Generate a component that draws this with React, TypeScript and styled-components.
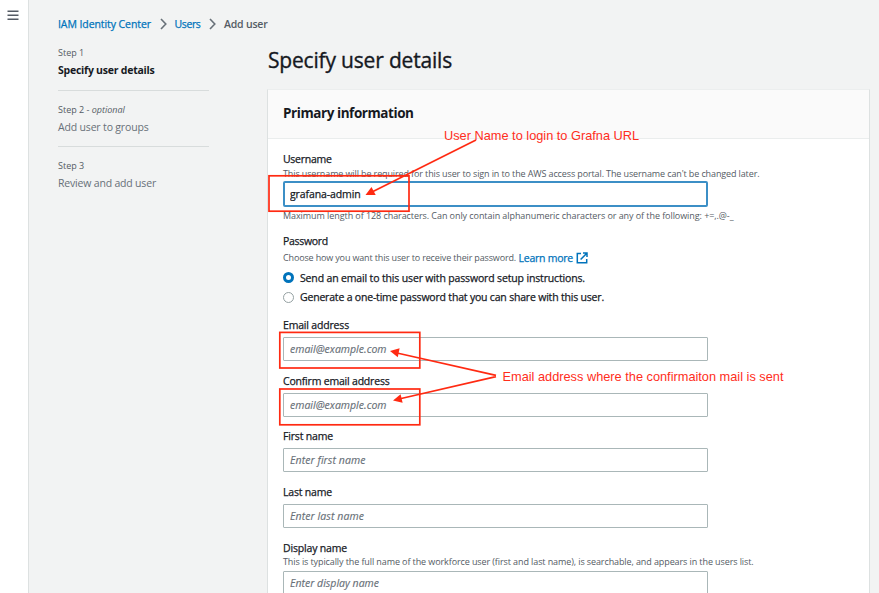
import React from "react";
import styled, { createGlobalStyle, css } from "styled-components";

const GlobalStyle = createGlobalStyle`
  * { box-sizing: border-box; }
  html, body { margin: 0; padding: 0; overflow: hidden; }
  body {
    background: #f2f3f3;
    color: #16191f;
    font-family: "Open Sans", "Noto Sans", sans-serif;
    font-size: 10.5px;
    line-height: 14px;
  }
`;

const medium = css`
  font-weight: 500;
  -webkit-text-stroke: 0.25px currentColor;
`;

const Page = styled.div`
  position: relative;
  display: flex;
  width: 879px;
  height: 593px;
  overflow: hidden;
`;

const Rail = styled.aside`
  flex: 0 0 29px;
  background: #fff;
  border-right: 1px solid #dde1e1;
  padding: 10px 0 0 7px;
`;

const MenuButton = styled.button`
  display: block;
  border: 0;
  padding: 0;
  background: none;
  width: 12px;
  height: 11px;
  svg { display: block; }
`;

const Content = styled.main`
  flex: 1;
  min-width: 0;
  padding: 16px 0 0 29px;
`;

const Text = styled.span<{ $ls?: number }>`
  white-space: nowrap;
  letter-spacing: ${(p) => p.$ls ?? 0}px;
`;

const Breadcrumbs = styled.nav`
  display: flex;
  align-items: center;
  height: 15px;
  svg { flex: none; margin: 0 8px 0 8.5px; }
`;

const Crumb = styled(Text)`
  color: #0073bb;
  ${medium}
`;

const CurrentCrumb = styled(Text)`
  color: #545b64;
  font-weight: 600;
`;

const Columns = styled.div`
  display: flex;
  align-items: flex-start;
`;

const Steps = styled.ol`
  list-style: none;
  margin: 0;
  padding: 15px 0 0;
  width: 151px;
  flex: none;
`;

const Step = styled.li`
  height: 56px;
  & + & { border-top: 1px solid #d8dcdc; padding-top: 12px; }
  &:first-child { height: 44px; }
`;

const StepNumber = styled.div`
  color: #545b64;
  font-size: 9px;
  line-height: 14px;
  white-space: nowrap;
`;

const StepTitle = styled.div<{ $active?: boolean; $ls: number }>`
  margin-top: 3px;
  white-space: nowrap;
  letter-spacing: ${(p) => p.$ls}px;
  ${(p) => (p.$active ? css`font-weight: 700; color: #16191f;` : css`color: #687078;`)}
`;

const FormColumn = styled.section`
  width: 603px;
  margin-left: 58px;
  flex: none;
`;

const PageTitle = styled.h1`
  margin: 0 0 0 1px;
  height: 58px;
  padding-top: 14px;
  font-size: 21px;
  line-height: 30px;
  font-weight: 400;
  letter-spacing: -0.184px;
  -webkit-text-stroke: 0.35px #16191f;
`;

const Card = styled.div`
  height: 540px;
  background: #fff;
  border: 1px solid #dde1e1;
  border-top-color: #eceeee;
`;

const CardHeader = styled.header`
  height: 49px;
  padding: 13px 15px 0;
  background: #fafafa;
  border-bottom: 1px solid #eaeded;
`;

const CardTitle = styled.h2`
  margin: 0;
  font-size: 13.5px;
  line-height: 20px;
  font-weight: 700;
  letter-spacing: -0.436px;
`;

const Form = styled.form`
  padding: 13px 0 0 15px;
  width: 440px;
`;

const Label = styled(Text)`
  display: block;
  ${medium}
`;

const Hint = styled(Text)`
  display: block;
  font-size: 9px;
  color: #545b64;
`;

const Input = styled.input<{ $ls: number; $focused?: boolean }>`
  display: block;
  width: 425px;
  height: 24px;
  padding: 0 6px;
  font: 500 10.5px/20px "Open Sans", "Noto Sans", sans-serif;
  letter-spacing: ${(p) => p.$ls}px;
  color: #16191f;
  background: #fff;
  outline: none;
  border-radius: 1px;
  border: 1px solid #aab7b8;
  ${(p) =>
    p.$focused &&
    css`
      height: 26px;
      border: 2px solid #3c8fc6;
      border-radius: 2px;
      padding: 0 5px;
      -webkit-text-stroke: 0.25px currentColor;
    `}
  &::placeholder { color: #687078; font-style: italic; font-weight: 400; opacity: 1; -webkit-text-stroke: 0.15px currentColor; }
`;

const UsernameGroup = styled.div`
  height: 82px;
  ${Label} + ${Hint} { margin-top: 1px; }
  ${Input} { margin: 0 0 2px; }
`;

const PasswordGroup = styled.fieldset`
  border: 0;
  margin: 0;
  padding: 0;
  height: 84.2px;
`;

const PasswordHint = styled.div`
  display: flex;
  align-items: center;
  margin-top: 3px;
  height: 14px;
  svg { margin-left: 3px; flex: none; }
`;

const LearnMore = styled(Text)`
  margin-left: 2.5px;
  color: #0073bb;
  ${medium}
`;

const RadioRow = styled.label`
  display: flex;
  align-items: center;
  height: 14px;
  margin-top: 5.5px;
  ${medium}
`;

const Radio = styled.span<{ $checked?: boolean }>`
  flex: none;
  width: 11px;
  height: 11px;
  margin-right: 6px;
  border-radius: 50%;
  background: #fff;
  border: ${(p) => (p.$checked ? "3.5px solid #0073bb" : "1px solid #95a1a2")};
`;

const Field = styled.div<{ $hint?: boolean }>`
  height: 55.6px;
  ${Label} { margin-bottom: ${(p) => (p.$hint ? 0.5 : 4.8)}px; }
  ${Hint} { margin-bottom: 1.5px; }
`;

const Annotations = styled.div`
  position: absolute;
  inset: 0;
  pointer-events: none;
  svg { display: block; }
`;

const Note = styled.span<{ $x: number; $y: number }>`
  position: absolute;
  left: ${(p) => p.$x}px;
  top: ${(p) => p.$y}px;
  font: 12.78px/16px "Liberation Sans", Arial, sans-serif;
  color: #ff2d1c;
  white-space: nowrap;
`;

const Chevron = () => (
  <svg width="7" height="12" viewBox="0 0 7 12" fill="none" stroke="#687078" strokeWidth="1.6">
    <path d="M1 1l4.8 5L1 11" />
  </svg>
);

const fields = [
  { label: "Email address", ls: -0.177, placeholder: "email@example.com", pls: 0.014 },
  { label: "Confirm email address", ls: -0.198, placeholder: "email@example.com", pls: 0.014 },
  { label: "First name", ls: -0.173, placeholder: "Enter first name", pls: 0.082 },
  { label: "Last name", ls: -0.187, placeholder: "Enter last name", pls: 0.086 },
  {
    label: "Display name",
    ls: -0.172,
    placeholder: "Enter display name",
    pls: 0.007,
    hint: "This is typically the full name of the workforce user (first and last name), is searchable, and appears in the users list.",
  },
];

export default function App() {
  return (
    <Page>
      <GlobalStyle />
      <Rail>
        <MenuButton type="button" aria-label="Open navigation">
          <svg width="12" height="11" viewBox="0 0 12 11" stroke="#545b64" strokeWidth="1.6">
            <path d="M.5 1.2h11M.5 5.2h11M.5 9.2h11" />
          </svg>
        </MenuButton>
      </Rail>
      <Content>
        <Breadcrumbs>
          <Crumb $ls={-0.076}>IAM Identity Center</Crumb>
          <Chevron />
          <Crumb $ls={-0.37}>Users</Crumb>
          <Chevron />
          <CurrentCrumb $ls={-0.2}>Add user</CurrentCrumb>
        </Breadcrumbs>
        <Columns>
          <Steps>
            <Step>
              <StepNumber>Step 1</StepNumber>
              <StepTitle $active $ls={-0.235}>Specify user details</StepTitle>
            </Step>
            <Step>
              <StepNumber>Step 2 - <i>optional</i></StepNumber>
              <StepTitle $ls={-0.169}>Add user to groups</StepTitle>
            </Step>
            <Step>
              <StepNumber>Step 3</StepNumber>
              <StepTitle $ls={-0.184}>Review and add user</StepTitle>
            </Step>
          </Steps>
          <FormColumn>
            <PageTitle>Specify user details</PageTitle>
            <Card>
              <CardHeader>
                <CardTitle>Primary information</CardTitle>
              </CardHeader>
              <Form>
                <UsernameGroup>
                  <Label $ls={-0.28}>Username</Label>
                  <Hint $ls={-0.119}>This username will be required for this user to sign in to the AWS access portal. The username can't be changed later.</Hint>
                  <Input $focused $ls={-0.109} defaultValue="grafana-admin" />
                  <Hint $ls={-0.069}>Maximum length of 128 characters. Can only contain alphanumeric characters or any of the following: +=,.@-_</Hint>
                </UsernameGroup>
                <PasswordGroup>
                  <Label $ls={-0.291}>Password</Label>
                  <PasswordHint>
                    <Hint $ls={-0.153}>Choose how you want this user to receive their password.</Hint>
                    <LearnMore $ls={-0.239}>Learn more</LearnMore>
                    <svg width="12" height="12" viewBox="0 0 12 12" fill="none" stroke="#0073bb" strokeWidth="1.5">
                      <path d="M5 1.4H1.3v9.3h9.4V7M7 1.1h4v4M11 1.1L4.6 7.5" />
                    </svg>
                  </PasswordHint>
                  <RadioRow>
                    <Radio $checked />
                    <Text $ls={-0.151}>Send an email to this user with password setup instructions.</Text>
                  </RadioRow>
                  <RadioRow>
                    <Radio />
                    <Text $ls={-0.19}>Generate a one-time password that you can share with this user.</Text>
                  </RadioRow>
                </PasswordGroup>
                {fields.map((f) => (
                  <Field key={f.label} $hint={!!f.hint}>
                    <Label $ls={f.ls}>{f.label}</Label>
                    {f.hint && <Hint $ls={-0.099}>{f.hint}</Hint>}
                    <Input $ls={f.pls} placeholder={f.placeholder} />
                  </Field>
                ))}
              </Form>
            </Card>
          </FormColumn>
        </Columns>
      </Content>
      <Annotations>
        <svg width="879" height="593" viewBox="0 0 879 593" fill="none" stroke="#ff2a12" strokeWidth="1.7">
          <rect x="269" y="175.8" width="140" height="35.4" />
          <rect x="279.8" y="332.4" width="140" height="35.6" />
          <rect x="279.8" y="389" width="140" height="35.8" />
          <path d="M476 140L373 191.5M496 375.3L397 353M496 376.7L399 399" />
          <g fill="#ff2a12" stroke="none">
            <path d="M365.5 195l6-7.9 4.2 7.9z" />
            <path d="M390 350.9l9.6-2.6-1.8 9z" />
            <path d="M393 400.6l7.6-6.4 2 8.6z" />
          </g>
        </svg>
        <Note $x={444} $y={128}>User Name to login to Grafna URL</Note>
        <Note $x={502.5} $y={369}>Email address where the confirmaiton mail is sent</Note>
      </Annotations>
    </Page>
  );
}
